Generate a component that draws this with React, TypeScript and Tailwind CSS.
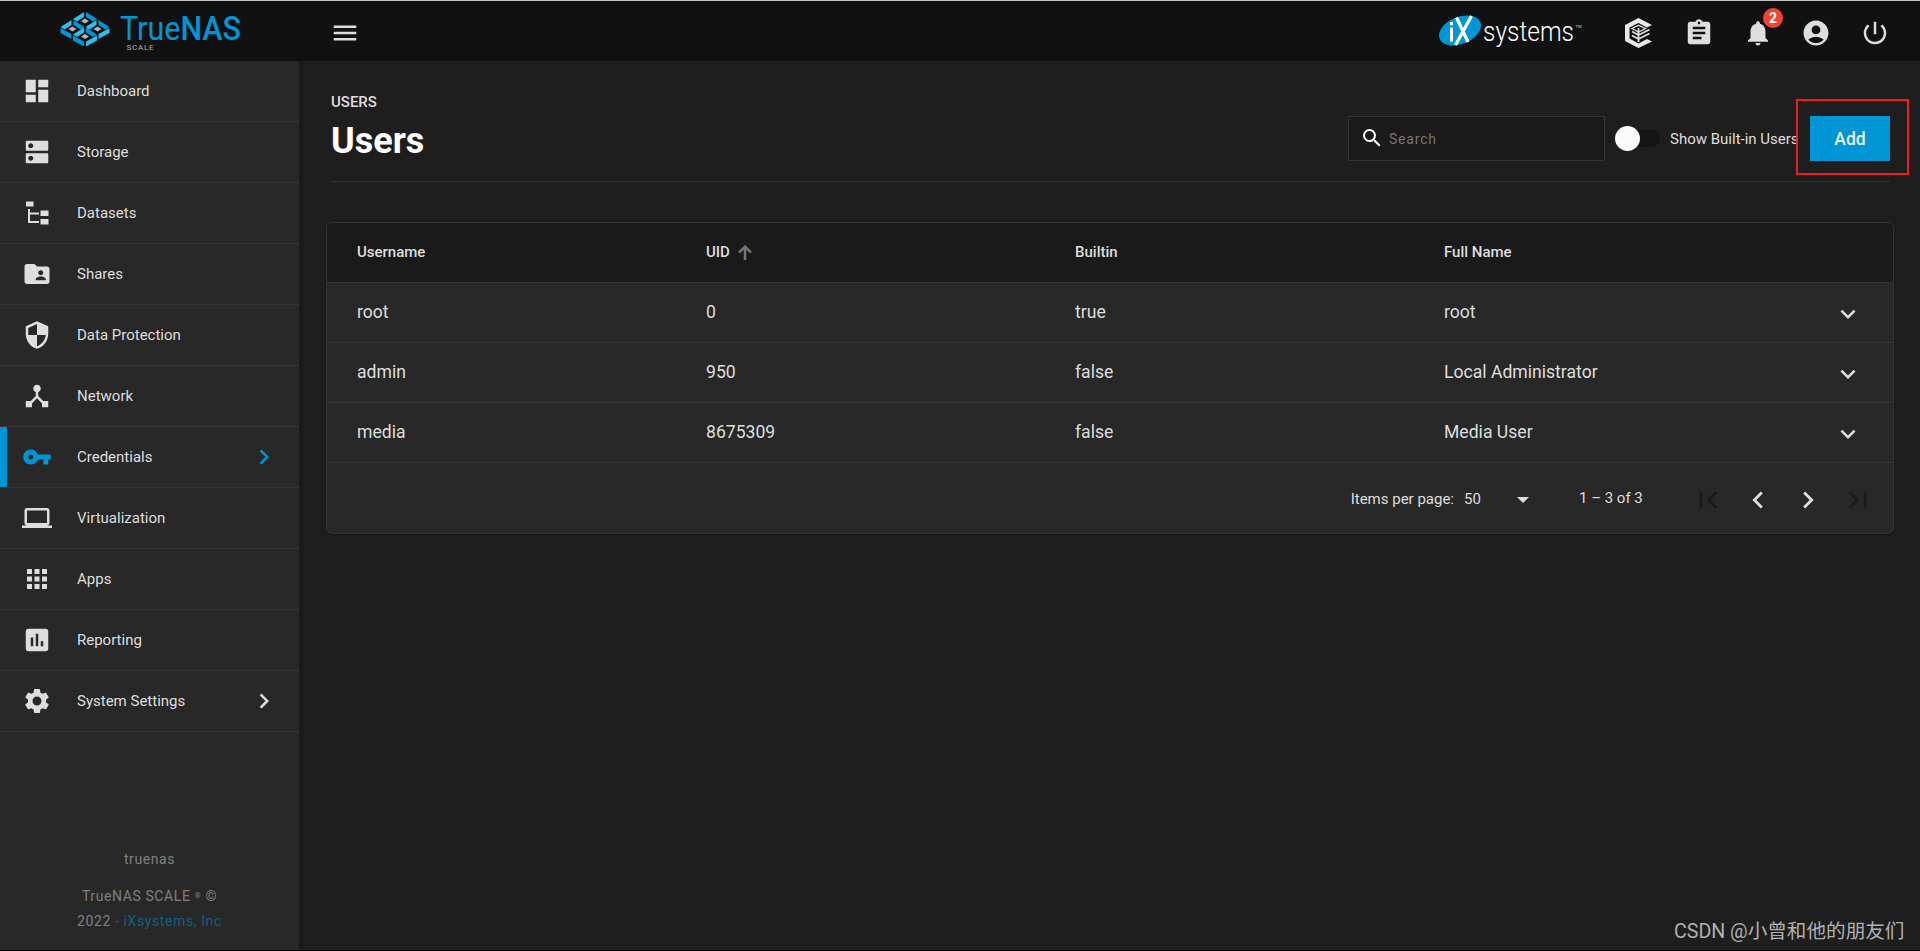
import type { ReactNode } from "react";
import type { IconType } from "react-icons";
import {
  MdAccountCircle,
  MdApps,
  MdAssessment,
  MdAssignment,
  MdChevronLeft,
  MdChevronRight,
  MdComputer,
  MdDashboard,
  MdDeviceHub,
  MdDns,
  MdExpandMore,
  MdFirstPage,
  MdFolderShared,
  MdLastPage,
  MdMenu,
  MdNotifications,
  MdPowerSettingsNew,
  MdSearch,
  MdSecurity,
  MdSettings,
  MdVpnKey,
} from "react-icons/md";

type NavItem = {
  label: string;
  icon: ReactNode;
  active?: boolean;
  expandable?: boolean;
};

type User = {
  username: string;
  uid: number;
  builtin: boolean;
  fullName: string;
};

const navIcon = (Icon: IconType) => <Icon size={30} />;

const navItems: NavItem[] = [
  { label: "Dashboard", icon: navIcon(MdDashboard) },
  { label: "Storage", icon: navIcon(MdDns) },
  { label: "Datasets", icon: <DatasetsIcon /> },
  { label: "Shares", icon: navIcon(MdFolderShared) },
  { label: "Data Protection", icon: navIcon(MdSecurity) },
  { label: "Network", icon: navIcon(MdDeviceHub) },
  { label: "Credentials", icon: navIcon(MdVpnKey), active: true, expandable: true },
  { label: "Virtualization", icon: navIcon(MdComputer) },
  { label: "Apps", icon: navIcon(MdApps) },
  { label: "Reporting", icon: navIcon(MdAssessment) },
  { label: "System Settings", icon: navIcon(MdSettings), expandable: true },
];

const users: User[] = [
  { username: "root", uid: 0, builtin: true, fullName: "root" },
  { username: "admin", uid: 950, builtin: false, fullName: "Local Administrator" },
  { username: "media", uid: 8675309, builtin: false, fullName: "Media User" },
];

function DatasetsIcon() {
  return (
    <svg width="30" height="30" viewBox="0 0 30 30" fill="currentColor">
      <path d="M4 3.5h7.500v5H4zM6 11h2v3.500h9v2H8V23h9v2H6zM18.500 12.500H26.500v5.500H18.500zM18.500 21H26.500v5.500H18.500z" />
    </svg>
  );
}

// One isometric cell of the logo; only the outer cells have lower walls
function Tile({ x, y, left, right }: { x: number; y: number; left?: boolean; right?: boolean }) {
  return (
    <g transform={`translate(${x} ${y})`}>
      <path d="M-12 -2L-1 -9V-4L-8 .5z" fill="#31beec" />
      <path d="M12 -2L1 -9V-4L8 .5z" fill="#0095d5" />
      {left && <path d="M-12 -1V4L-1 10V5z" fill="#0095d5" />}
      {right && <path d="M12 -1V4L1 10V5z" fill="#31beec" />}
      <path d="M0 -2.500L4 0L0 2.500L-4 0z" fill="#b4b4b4" />
    </g>
  );
}

function TrueNasLogo() {
  return (
    <svg width="190" height="60" viewBox="0 0 190 60">
      <Tile x={25} y={20} />
      <Tile x={12.5} y={28} left />
      <Tile x={37.5} y={28} right />
      <Tile x={25} y={35.5} left right />
      <text x="60" y="39" textLength="121" lengthAdjust="spacingAndGlyphs" fill="#0095d5" className="font-['Roboto'] text-[33px]">
        True<tspan className="font-medium">NAS</tspan>
      </text>
      <text x="66.500" y="49" textLength="27" fill="#b5b5b5" className="font-['Roboto'] text-[8px]">
        SCALE
      </text>
    </svg>
  );
}

function IxLogo() {
  return (
    <svg width="144" height="60" viewBox="0 0 144 60">
      <ellipse cx="21" cy="29.500" rx="22" ry="13.500" transform="rotate(-22 21 29.500)" fill="#0095d5" />
      <path d="M11 26.500h3v14H11zM11 21h3v3.200H11z" fill="#fff" />
      <path d="M16.500 44L32.500 15M17.500 16.500L29 41" stroke="#fff" strokeWidth="3.200" fill="none" />
      <text x="44" y="39.500" textLength="91" lengthAdjust="spacingAndGlyphs" fill="#fff" className="font-['Roboto'] text-[27px] font-light">
        systems
      </text>
      <text x="136.500" y="27" fill="#ccc" className="font-['Roboto'] text-[4px]">
        TM
      </text>
    </svg>
  );
}

function TrueCommandIcon() {
  return (
    <svg width="30" height="30" viewBox="-1 0 30 30" fill="none">
      <path
        d="M13.500 0L27 7L22 9.500L13.500 5L4.500 9.500V20.500L13.500 25.500L22 21L27 23.500L13.500 30L0 23V7z"
        fill="#e8e8e8"
      />
      <path d="M7 10.500L13.500 7.300L20.500 10.500L13.500 14z" stroke="#dedede" strokeWidth="1.300" />
      <path d="M7 13.500L13.500 17L24.500 11.500M7 17.500L13.500 21L24.500 15.500M13.500 10v14" stroke="#dedede" strokeWidth="1.800" />
    </svg>
  );
}

function Header() {
  return (
    <header className="flex h-[61px] shrink-0 items-center border-t border-[#c4c4c4] bg-[#111] text-[#dedede]">
      <div className="w-[300px] pl-[60px]">
        <TrueNasLogo />
      </div>
      <MdMenu size={30} className="mt-[3px] ml-[30px]" />
      <div className="ml-auto">
        <IxLogo />
      </div>
      <div className="mt-[3px] mr-[30px] ml-[41px] flex gap-7">
        <TrueCommandIcon />
        <MdAssignment size={30} className="ml-[2px]" />
        <div className="relative ml-px">
          <MdNotifications size={30} />
          <span className="absolute -top-[10px] left-5 flex size-5 items-center justify-center rounded-full bg-[#f44336] text-sm font-bold text-white">
            2
          </span>
        </div>
        <MdAccountCircle size={30} />
        <MdPowerSettingsNew size={30} className="ml-px" />
      </div>
    </header>
  );
}

function Sidebar() {
  return (
    <aside className="flex w-[300px] shrink-0 flex-col border-r border-[#212121] bg-[#282828] shadow-[1px_0_3px_rgba(0,0,0,0.4)]">
      <nav>
        {navItems.map((item) => (
          <div key={item.label} className="relative flex h-[61px] items-center border-b border-[#353535] pl-[22px] text-[#dedede]">
            {item.active && <span className="absolute inset-y-0 left-0 w-[7px] bg-[#0095d5]" />}
            <span className={item.active ? "text-[#0095d5]" : ""}>{item.icon}</span>
            <span className="ml-[25px] text-[15px]">{item.label}</span>
            {item.expandable && (
              <MdChevronRight size={30} className={item.active ? "mr-5 ml-auto text-[#0095d5]" : "mr-5 ml-auto"} />
            )}
          </div>
        ))}
      </nav>
      <footer className="mt-auto pb-4 text-center text-sm tracking-[0.6px] text-[#808080]">
        <p className="mb-3 leading-[25px]">truenas</p>
        <p className="leading-[25px]">
          TrueNAS SCALE <span className="align-[3px] text-[8px] leading-none">®</span> ©
        </p>
        <p className="leading-[25px]">
          2022 <span className="text-[#0f6288]">- iXsystems, Inc</span>
        </p>
      </footer>
    </aside>
  );
}

function PageHeader() {
  return (
    <div className="mr-1 ml-[5px] flex h-[121px] justify-between border-b border-[#333]">
      <div className="pt-[31px]">
        <p className="text-[15px] leading-5 font-medium text-[#dedede]">USERS</p>
        <h1 className="mt-[9px] text-[36px] leading-10 font-bold text-white">Users</h1>
      </div>
      <div className="mt-[55px] flex h-[45px] items-center">
        <div className="flex h-[45px] w-[257px] items-center border border-[#333] bg-[#1a1a1a] pl-[11px] text-[#dedede]">
          <MdSearch size={24} className="-mt-0.5 text-white" />
          <span className="ml-[5px] text-sm tracking-[0.8px] text-[#757575]">Search</span>
        </div>
        <div className="relative ml-[10px] h-[17px] w-[45px] rounded-full bg-[#141414]">
          <span className="absolute -top-1 left-0 size-[25px] rounded-full bg-[#fafafa]" />
        </div>
        <span className="mt-0.5 ml-[10px] w-[140px] text-[15px] text-[#dedede]">Show Built-in Users</span>
        <div className="relative">
          <button className="h-[45px] w-20 bg-[#0095d5] pt-0.5 text-[17.500px] font-medium text-[#f0f0f0]">Add</button>
          <span className="absolute -top-[17px] -left-[14px] h-[76px] w-[113px] border-2 border-[#ed1c24]" />
        </div>
      </div>
    </div>
  );
}

function SortArrow() {
  return (
    <svg width="14" height="15" viewBox="0 0 14 15" className="ml-2" fill="none" stroke="#757575" strokeWidth="2.500">
      <path d="M7 15V2M1 7.500L7 1.700L13 7.500" />
    </svg>
  );
}

function Paginator() {
  return (
    <div className="flex h-[70px] items-center justify-end pt-[3px] pr-[18px] text-[15px] text-[#dedede]">
      <span>Items per page:</span>
      <span className="ml-[10px] w-[53px]">50</span>
      <span className="border-x-[6px] border-t-[6px] border-x-transparent border-t-[#dedede]" />
      <span className="-mt-[2px] ml-[50px] w-[112px]">1 – 3 of 3</span>
      <div className="flex gap-4">
        <MdFirstPage size={34} className="text-[#1a1a1a]" />
        <MdChevronLeft size={34} />
        <MdChevronRight size={34} />
        <MdLastPage size={34} className="text-[#1a1a1a]" />
      </div>
    </div>
  );
}

function UsersTable() {
  return (
    <div className="mt-[40px] overflow-hidden rounded-md border border-[#333] bg-[#282828] text-[#dedede] shadow-[0_1px_2px_rgba(0,0,0,0.4)]">
      <div className="grid h-[60px] grid-cols-[349px_369px_369px_1fr] items-center border-b border-[#333] bg-[#1a1a1a] pl-[30px] text-[15px] font-medium">
        <span>Username</span>
        <span className="flex items-center">
          UID <SortArrow />
        </span>
        <span>Builtin</span>
        <span>Full Name</span>
      </div>
      {users.map((user) => (
        <div
          key={user.username}
          className="grid h-[60px] grid-cols-[349px_369px_369px_1fr_60px] items-center border-b border-[#353535] pl-[30px] text-[17.600px]"
        >
          <span>{user.username}</span>
          <span>{user.uid}</span>
          <span>{String(user.builtin)}</span>
          <span>{user.fullName}</span>
          <MdExpandMore size={30} className="mt-[3px]" />
        </div>
      ))}
      <Paginator />
    </div>
  );
}

export default function App() {
  return (
    <div className="flex h-[951px] w-[1920px] flex-col overflow-hidden border-b border-black bg-[#1e1e1e] font-['Roboto',sans-serif]">
      <Header />
      <div className="flex min-h-0 flex-1">
        <Sidebar />
        <main className="flex-1 px-[26px]">
          <PageHeader />
          <UsersTable />
        </main>
      </div>
      <span className="absolute top-[918px] left-[1674px] font-['Roboto','Noto_Sans_CJK_SC',sans-serif] text-[19.600px] leading-[28px] whitespace-nowrap text-[#b0b0b0]">
        CSDN @小曾和他的朋友们
      </span>
    </div>
  );
}
